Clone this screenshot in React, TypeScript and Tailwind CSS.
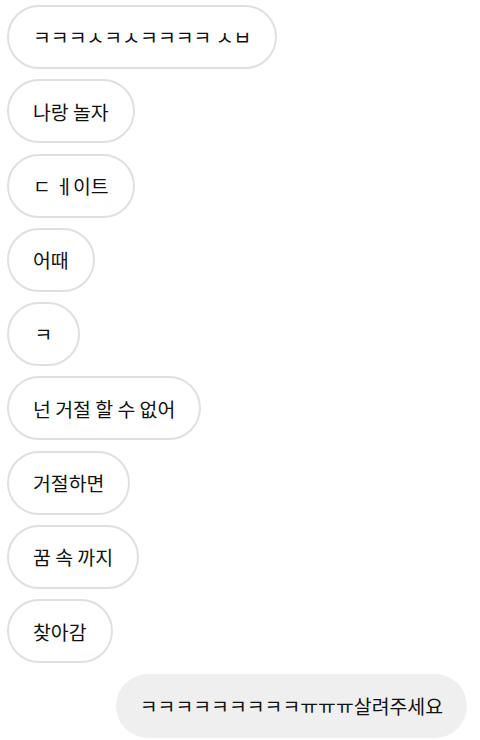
const incoming = [
  'ㅋㅋㅋㅅㅋㅅㅋㅋㅋㅋ ㅅㅂ',
  '나랑 놀자',
  'ㄷ ㅔ이트',
  '어때',
  'ㅋ',
  '넌 거절 할 수 없어',
  '거절하면',
  '꿈 속 까지',
  '찾아감',
]

const outgoing = 'ㅋㅋㅋㅋㅋㅋㅋㅋㅋㅠㅠㅠ살려주세요'

export default function App() {
  return (
    <div
      className="w-[480px] h-[740px] bg-white overflow-hidden text-[#111] text-[19.4px] leading-none"
      style={{ fontFamily: '"Noto Sans CJK KR", "Noto Sans", sans-serif' }}
    >
      <div className="flex flex-col gap-[10.3px] pt-[5px]">
        {incoming.map((msg, i) => (
          <div key={i} className="pl-[7px] flex">
            <div className="h-16 min-w-[73px] px-6 flex items-center justify-center rounded-full border-2 border-[#e0e0e0] bg-white whitespace-pre">
              {msg}
            </div>
          </div>
        ))}
        <div className="pr-[13px] flex justify-end">
          <div className="h-16 px-6 flex items-center rounded-full bg-[#efefef] whitespace-pre">
            {outgoing}
          </div>
        </div>
      </div>
    </div>
  )
}
